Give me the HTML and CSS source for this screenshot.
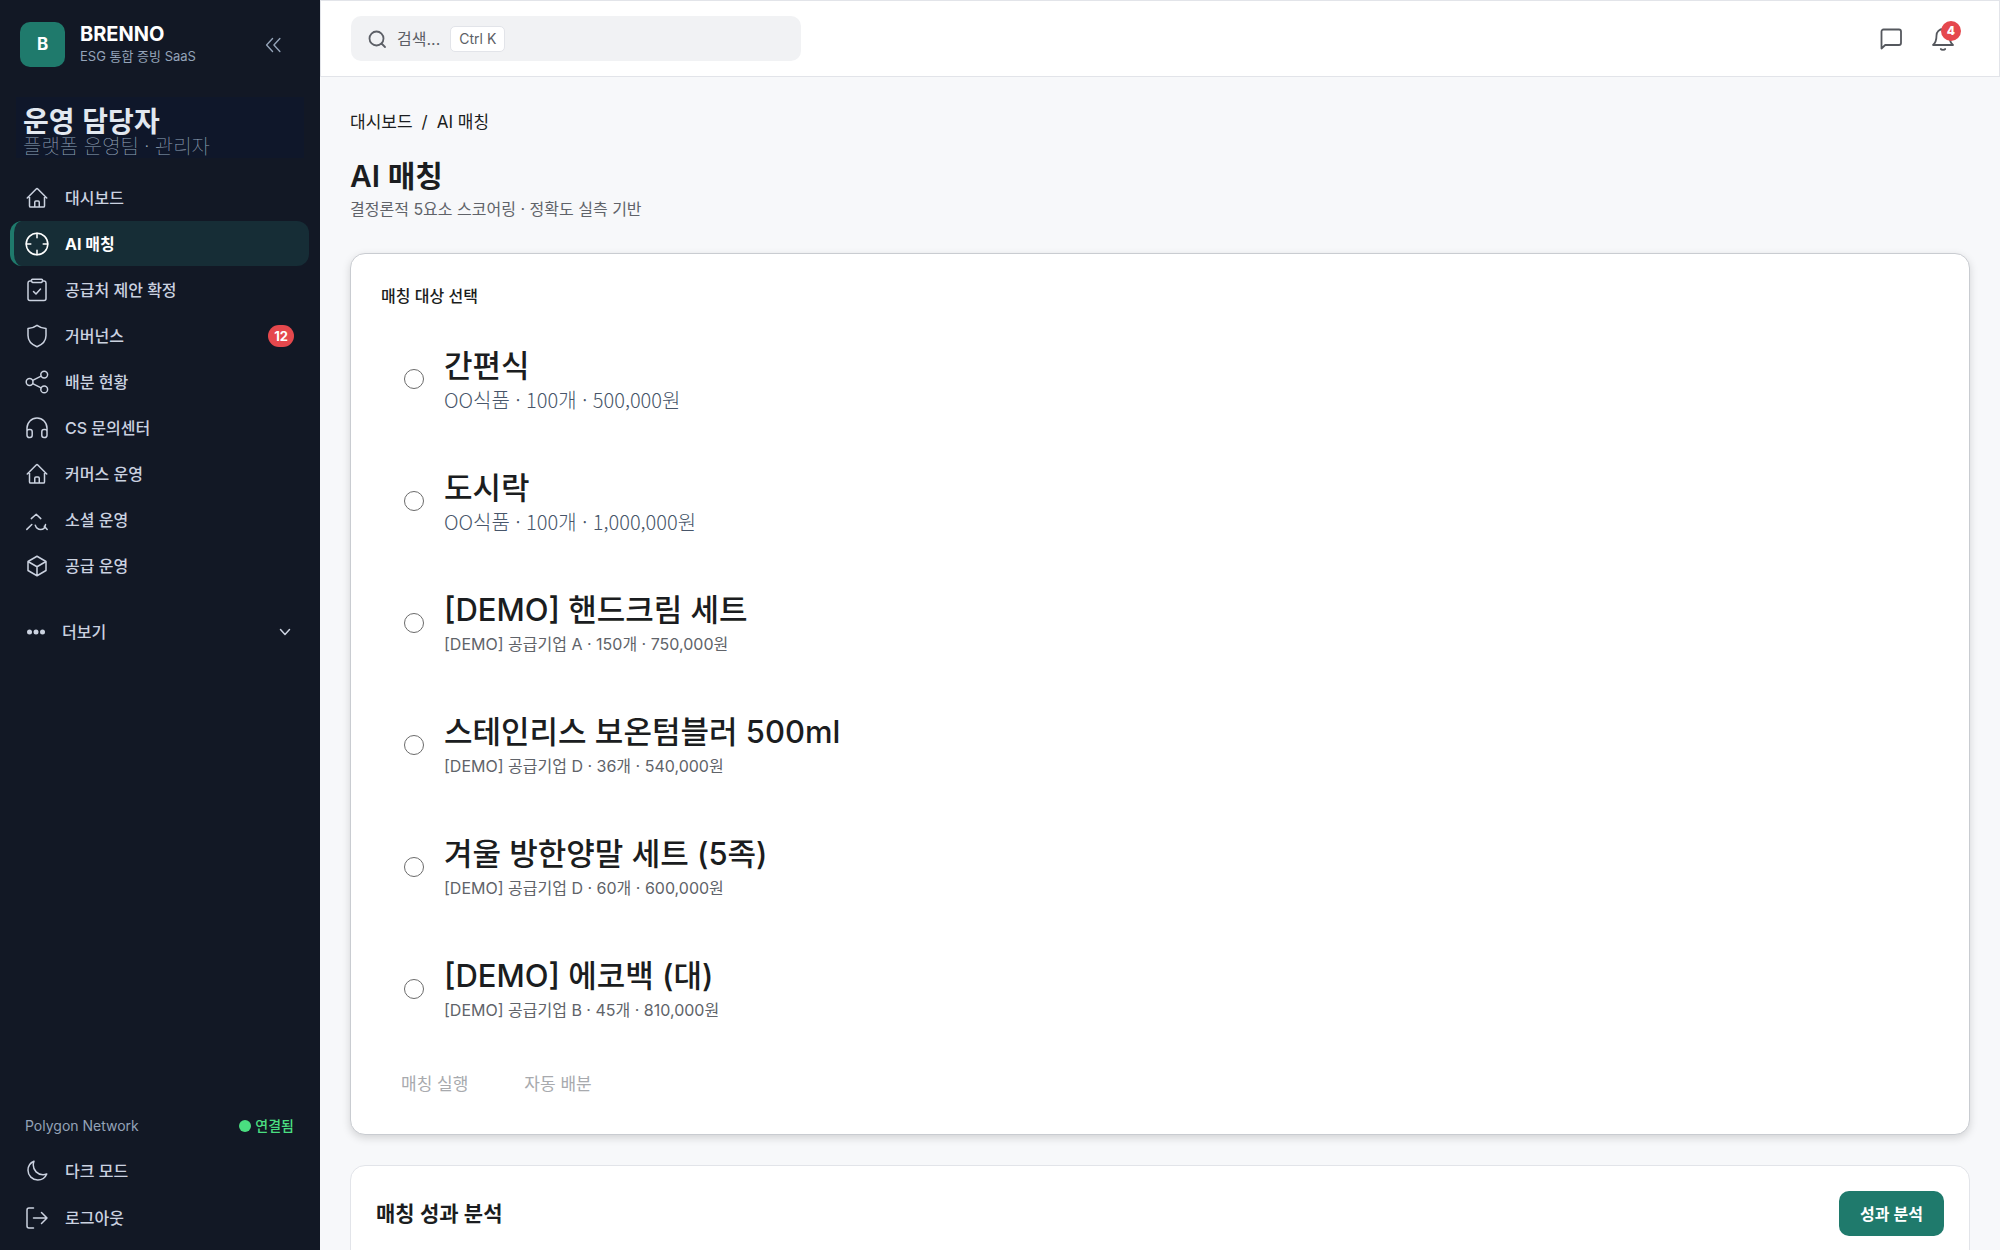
FILE: index.html
```html
<!DOCTYPE html>
<html lang="ko">
<head>
  <meta charset="UTF-8">
  <meta name="viewport" content="width=device-width, initial-scale=1">
  <title>AI 매칭 - BRENNO</title>
  <link rel="stylesheet" href="styles.css">
</head>
<body>
<div class="app">

  <!-- 사이드바 -->
  <aside class="sidebar">
    <div class="brand">
      <div class="brand-logo">B</div>
      <div class="brand-text">
        <div class="brand-name">BRENNO</div>
        <div class="brand-sub">ESG 통합 증빙 SaaS</div>
      </div>
      <button type="button" class="collapse" aria-label="사이드바 접기">
        <svg class="icon" viewBox="0 0 24 24"><path d="M11.5 5 5 12l6.5 7M19.5 5 13 12l6.5 7"/></svg>
      </button>
    </div>

    <div class="profile">
      <div class="profile-name">운영 담당자</div>
      <div class="profile-role">플랫폼 운영팀 · 관리자</div>
    </div>

    <nav class="nav">
      <a href="#" class="nav-item">
        <svg class="icon" viewBox="0 0 24 24"><path d="m2.25 12 8.954-8.955c.44-.439 1.152-.439 1.591 0L21.75 12M4.5 9.75v10.125c0 .621.504 1.125 1.125 1.125H9.75v-4.875c0-.621.504-1.125 1.125-1.125h2.25c.621 0 1.125.504 1.125 1.125V21h4.125c.621 0 1.125-.504 1.125-1.125V9.75M8.25 21h8.25"/></svg>
        <span>대시보드</span>
      </a>
      <a href="#" class="nav-item active">
        <svg class="icon" viewBox="0 0 24 24"><circle cx="12" cy="12" r="10.8"/><path d="M12 1.2v4.6M12 18.2v4.6M1.2 12h4.6M18.2 12h4.6"/></svg>
        <span>AI 매칭</span>
      </a>
      <a href="#" class="nav-item">
        <svg class="icon" viewBox="0 0 24 24"><path d="M6.5 3H4.8A2 2 0 0 0 3 5v15.5a2 2 0 0 0 2 2h14a2 2 0 0 0 2-2V5a2 2 0 0 0-1.8-2H17.5M7.5 1.2h9a1 1 0 0 1 1 1.2l-.4 1.4a1 1 0 0 1-1 .8H7.9a1 1 0 0 1-1-.8l-.4-1.4a1 1 0 0 1 1-1.2ZM8.5 13.5l2.500 2.500 4.500-5"/></svg>
        <span>공급처 제안 확정</span>
      </a>
      <a href="#" class="nav-item">
        <svg class="icon" viewBox="0 0 24 24"><path d="M12 1.3c2.5 1.9 5.5 2.9 9 3.1v7c0 5.2-3.5 9-9 11.3-5.5-2.3-9-6.1-9-11.3v-7c3.5-.2 6.500-1.200 9-3.100Z"/></svg>
        <span>거버넌스</span>
        <span class="badge">12</span>
      </a>
      <a href="#" class="nav-item">
        <svg class="icon" viewBox="0 0 24 24"><circle cx="19.2" cy="4.6" r="3.4"/><circle cx="4.6" cy="12" r="3.4"/><circle cx="19.2" cy="19.4" r="3.4"/><path d="m7.7 10.4 8.4-4.2M7.7 13.6l8.4 4.2"/></svg>
        <span>배분 현황</span>
      </a>
      <a href="#" class="nav-item">
        <svg class="icon" viewBox="0 0 24 24"><path d="M2 18.5V12a10 10 0 0 1 20 0v6.5M2 15.5a2 2 0 0 1 2-2h1a2.2 2.2 0 0 1 2.2 2.2v3.6A2.2 2.2 0 0 1 5 21.5h-.8A2.2 2.2 0 0 1 2 19.3ZM22 15.5a2 2 0 0 0-2-2h-1a2.2 2.2 0 0 0-2.2 2.2v3.6a2.2 2.2 0 0 0 2.2 2.2h.8a2.2 2.2 0 0 0 2.2-2.2Z"/></svg>
        <span>CS 문의센터</span>
      </a>
      <a href="#" class="nav-item">
        <svg class="icon" viewBox="0 0 24 24"><path d="m2.25 12 8.954-8.955c.44-.439 1.152-.439 1.591 0L21.75 12M4.5 9.75v10.125c0 .621.504 1.125 1.125 1.125H9.75v-4.875c0-.621.504-1.125 1.125-1.125h2.25c.621 0 1.125.504 1.125 1.125V21h4.125c.621 0 1.125-.504 1.125-1.125V9.75M8.25 21h8.25"/></svg>
        <span>커머스 운영</span>
      </a>
      <a href="#" class="nav-item">
        <svg class="icon" viewBox="0 0 24 24"><path d="m6.3 10.6 4.9-4.3 4.6 4.3M1.8 21.4l5-4.9M10.3 17.2c1 2.9 2.9 4.3 5.3 4.3 2.6 0 4.5-1.6 4.9-4.9M19.3 18.3l2.9 3.2"/></svg>
        <span>소셜 운영</span>
      </a>
      <a href="#" class="nav-item">
        <svg class="icon" viewBox="0 0 24 24"><path d="m21 7.5-9-5.25L3 7.5m18 0-9 5.25m9-5.25v9l-9 5.25M3 7.5l9 5.25M3 7.5v9l9 5.25m0-9v9"/></svg>
        <span>공급 운영</span>
      </a>
    </nav>

    <button type="button" class="more">
      <svg class="icon icon-sm" viewBox="0 0 20 20"><g fill="currentColor" stroke="none"><circle cx="3.5" cy="10" r="2.5"/><circle cx="10" cy="10" r="2.5"/><circle cx="16.5" cy="10" r="2.5"/></g></svg>
      <span>더보기</span>
      <svg class="icon more-arrow" viewBox="0 0 16 16"><path d="m3.5 5.5 4.5 5 4.5-5"/></svg>
    </button>

    <div class="sidebar-bottom">
      <div class="network">
        <span>Polygon Network</span>
        <span class="network-state"><i class="dot"></i>연결됨</span>
      </div>
      <button type="button" class="nav-item">
        <svg class="icon" viewBox="0 0 24 24"><path d="M21.752 15.002A9.72 9.72 0 0 1 18 15.75c-5.385 0-9.75-4.365-9.75-9.75 0-1.33.266-2.597.748-3.752A9.753 9.753 0 0 0 3 11.25C3 16.635 7.365 21 12.75 21a9.753 9.753 0 0 0 9.002-5.998Z"/></svg>
        <span>다크 모드</span>
      </button>
      <button type="button" class="nav-item">
        <svg class="icon" viewBox="0 0 24 24"><path d="M8.5 2H4a2 2 0 0 0-2 2v16a2 2 0 0 0 2 2h4.5M8.5 12H22M16.5 6.5 22 12l-5.5 5.5"/></svg>
        <span>로그아웃</span>
      </button>
    </div>
  </aside>

  <div class="main">
    <!-- 상단 바 -->
    <header class="topbar">
      <button type="button" class="search">
        <svg class="icon icon-sm" viewBox="0 0 20 20"><circle cx="9.5" cy="9.5" r="7"/><path d="m14.5 14.5 3.5 3.5"/></svg>
        <span>검색...</span>
        <kbd>Ctrl K</kbd>
      </button>
      <div class="topbar-actions">
        <button type="button" class="icon-btn" aria-label="메시지">
          <svg class="icon" viewBox="0 0 24 24"><path d="M2.5 21.5V4.5a2 2 0 0 1 2-2h15.5a2 2 0 0 1 2 2v11.5a2 2 0 0 1-2 2H6.2Z"/></svg>
        </button>
        <button type="button" class="icon-btn" aria-label="알림">
          <svg class="icon" viewBox="0 0 24 24"><path d="M12 2a6.5 6.5 0 0 0-6.5 6.5c0 4.5-1 7.5-3.5 9.5h20c-2.5-2-3.5-5-3.5-9.5A6.5 6.5 0 0 0 12 2ZM9.8 22c.6 1.2 3.8 1.2 4.4 0"/></svg>
          <span class="count">4</span>
        </button>
      </div>
    </header>

    <main class="content">
      <div class="breadcrumb"><a href="#">대시보드</a><span>/</span><span>AI 매칭</span></div>
      <h1>AI 매칭</h1>
      <p class="subtitle">결정론적 5요소 스코어링 · 정확도 실측 기반</p>

      <!-- 매칭 대상 -->
      <section class="card card-main">
        <h2>매칭 대상 선택</h2>
        <div class="targets">
          <label class="target">
            <input type="radio" name="target">
            <span class="target-text">
              <span class="target-name">간편식</span>
              <span class="target-meta thin">OO식품 · 100개 · 500,000원</span>
            </span>
          </label>
          <label class="target">
            <input type="radio" name="target">
            <span class="target-text">
              <span class="target-name">도시락</span>
              <span class="target-meta thin">OO식품 · 100개 · 1,000,000원</span>
            </span>
          </label>
          <label class="target">
            <input type="radio" name="target">
            <span class="target-text">
              <span class="target-name">[DEMO] 핸드크림 세트</span>
              <span class="target-meta">[DEMO] 공급기업 A · 150개 · 750,000원</span>
            </span>
          </label>
          <label class="target">
            <input type="radio" name="target">
            <span class="target-text">
              <span class="target-name">스테인리스 보온텀블러 500ml</span>
              <span class="target-meta">[DEMO] 공급기업 D · 36개 · 540,000원</span>
            </span>
          </label>
          <label class="target">
            <input type="radio" name="target">
            <span class="target-text">
              <span class="target-name">겨울 방한양말 세트 (5족)</span>
              <span class="target-meta">[DEMO] 공급기업 D · 60개 · 600,000원</span>
            </span>
          </label>
          <label class="target">
            <input type="radio" name="target">
            <span class="target-text">
              <span class="target-name">[DEMO] 에코백 (대)</span>
              <span class="target-meta">[DEMO] 공급기업 B · 45개 · 810,000원</span>
            </span>
          </label>
        </div>
        <div class="actions">
          <button type="button" class="btn-text" disabled>매칭 실행</button>
          <button type="button" class="btn-text" disabled>자동 배분</button>
        </div>
      </section>

      <!-- 성과 분석 -->
      <section class="card card-stats">
        <h2>매칭 성과 분석</h2>
        <button type="button" class="btn-primary">성과 분석</button>
      </section>
    </main>
  </div>

</div>
</body>
</html>
```
FILE: styles.css
```css
* {
  box-sizing: border-box;
}
body {
  margin: 0;
  font-family: Inter, 'Noto Sans CJK KR', sans-serif;
  font-size: 16px;
  line-height: 24px;
  color: #1b1d20;
  background: #f7f8fa;
}
h1, h2, p {
  margin: 0;
}
button {
  font: inherit;
  color: inherit;
  background: none;
  border: none;
  padding: 0;
  cursor: pointer;
}
a {
  color: inherit;
  text-decoration: none;
}
.app {
  display: flex;
  height: 100vh;
  overflow: hidden;
}
.icon {
  width: 24px;
  height: 24px;
  flex: none;
  fill: none;
  stroke: currentColor;
  stroke-width: 1.5;
  stroke-linecap: round;
  stroke-linejoin: round;
}
.icon-sm {
  width: 20px;
  height: 20px;
}

/* 사이드바 */
.sidebar {
  width: 320px;
  flex: none;
  display: flex;
  flex-direction: column;
  padding: 22px 11px 10px 10px;
  background: #121825;
  color: #cbd2e0;
}
.brand {
  display: flex;
  align-items: center;
  padding: 0 25px 0 10px;
}
.brand-logo {
  width: 45px;
  height: 45px;
  border-radius: 10px;
  background: #1f7a6c;
  color: #fff;
  font-size: 17px;
  font-weight: 700;
  line-height: 45px;
  text-align: center;
}
.brand-text {
  flex: 1;
  margin-left: 15px;
}
.brand-name {
  font-size: 20px;
  font-weight: 700;
  line-height: 22px;
  color: #fff;
}
.brand-sub {
  font-size: 13px;
  line-height: 22px;
  color: #94a3b8;
}
.collapse {
  display: flex;
  color: #94a3b8;
}
.collapse .icon {
  width: 22px;
  height: 22px;
}
.profile {
  margin: 30px 5px 17px 6px;
  padding: 10px 7px 0;
  background: #0f172a;
  font-family: 'Noto Sans CJK KR', sans-serif;
}
.profile-name {
  font-size: 28px;
  font-weight: 700;
  line-height: 27px;
  color: #e2e8f0;
}
.profile-role {
  font-size: 20px;
  font-weight: 100;
  line-height: 24px;
  color: #94a3b8;
}
.nav {
  display: flex;
  flex-direction: column;
  gap: 1px;
}
.nav-item {
  display: flex;
  align-items: center;
  gap: 16px;
  width: 100%;
  height: 45px;
  padding: 0 15px 0 11px;
  border-left: 4px solid transparent;
  border-radius: 12px;
  font-weight: 500;
}
.nav-item.active {
  background: #162d36;
  border-left-color: #1f7a6c;
  color: #fff;
  font-weight: 700;
}
.badge {
  margin-left: auto;
  padding: 0 6px;
  border-radius: 11px;
  background: #e5484d;
  color: #fff;
  font-size: 13px;
  font-weight: 700;
  line-height: 22px;
}
.more {
  display: flex;
  align-items: center;
  gap: 16px;
  height: 45px;
  margin-top: 21px;
  padding: 0 16px;
  font-weight: 500;
}
.more-arrow {
  width: 16px;
  height: 16px;
  margin-left: auto;
}
.sidebar-bottom {
  margin-top: auto;
  display: flex;
  flex-direction: column;
  gap: 2px;
}
.network {
  display: flex;
  justify-content: space-between;
  padding: 0 15px 8px;
  font-size: 14px;
  color: #94a3b8;
}
.network-state {
  display: flex;
  align-items: center;
  gap: 4px;
  color: #4ade80;
  font-weight: 500;
}
.dot {
  width: 12px;
  height: 12px;
  border-radius: 50%;
  background: #4ade80;
}

/* 상단 바 */
.main {
  flex: 1;
  min-width: 0;
}
.topbar {
  display: flex;
  align-items: center;
  justify-content: space-between;
  height: 77px;
  padding: 0 44px 0 30px;
  background: #fff;
  border: 1px solid #e2e4e9;
}
.search {
  display: flex;
  align-items: center;
  gap: 10px;
  width: 450px;
  height: 45px;
  padding: 0 16px;
  border-radius: 10px;
  background: #f1f2f4;
  color: #5c5f66;
}
.search kbd {
  padding: 0 8px;
  border: 1px solid #e2e4e9;
  border-radius: 5px;
  background: #fff;
  font-family: inherit;
  font-size: 14px;
}
.search .icon,
.topbar-actions .icon {
  stroke-width: 1.8;
}
.topbar-actions {
  display: flex;
  gap: 28px;
  color: #55585e;
}
.icon-btn {
  position: relative;
  display: flex;
}
.count {
  position: absolute;
  top: -6px;
  right: -6px;
  width: 20px;
  height: 20px;
  border-radius: 50%;
  background: #e5484d;
  color: #fff;
  font-size: 12px;
  font-weight: 800;
  line-height: 20px;
}

/* 본문 */
.content {
  padding: 33px 30px;
}
.breadcrumb {
  display: flex;
  gap: 9px;
  font-size: 17px;
}
h1 {
  margin-top: 21px;
  font-size: 30px;
  font-weight: 600;
  line-height: 42px;
}
.subtitle {
  color: #606369;
}
.card {
  background: #fff;
  border: 1px solid #e2e4e9;
  border-radius: 15px;
}
.card-main {
  margin-top: 32px;
  padding: 30px 30px 28px;
  border-color: #c9ccd1;
  box-shadow: 0 3px 8px rgba(0, 0, 0, 0.15);
}
.card-main h2 {
  font-size: 16px;
  font-weight: 500;
}
.targets {
  display: flex;
  flex-direction: column;
  gap: 8px;
  margin-top: 14px;
}
.target {
  display: flex;
  align-items: center;
  gap: 20px;
  padding: 23px;
}
.target input {
  appearance: none;
  width: 20px;
  height: 20px;
  margin: 0;
  border: 1px solid #6b6b6b;
  border-radius: 50%;
  background: #fff;
}
.target input:checked {
  border: 6px solid #1f7a6c;
}
.target-text {
  display: flex;
  flex-direction: column;
}
.target-name {
  font-size: 31px;
  font-weight: 500;
  line-height: 42px;
}
.target-meta {
  line-height: 26px;
  color: #606369;
}
.target-meta.thin {
  font-family: 'Noto Sans CJK KR', sans-serif;
  font-size: 20px;
  font-weight: 200;
  color: #475569;
}
.actions {
  display: flex;
  gap: 16px;
  margin-top: 15px;
}
.btn-text {
  height: 45px;
  padding: 0 20px;
  font-size: 17px;
  color: #a8aaae;
  cursor: default;
}
.card-stats {
  display: flex;
  align-items: center;
  justify-content: space-between;
  margin-top: 30px;
  padding: 25px 25px 60px;
}
.card-stats h2 {
  font-size: 21px;
  font-weight: 600;
}
.btn-primary {
  height: 45px;
  padding: 0 21px;
  border-radius: 10px;
  background: #1f7a6c;
  color: #fff;
  font-weight: 600;
}
```
